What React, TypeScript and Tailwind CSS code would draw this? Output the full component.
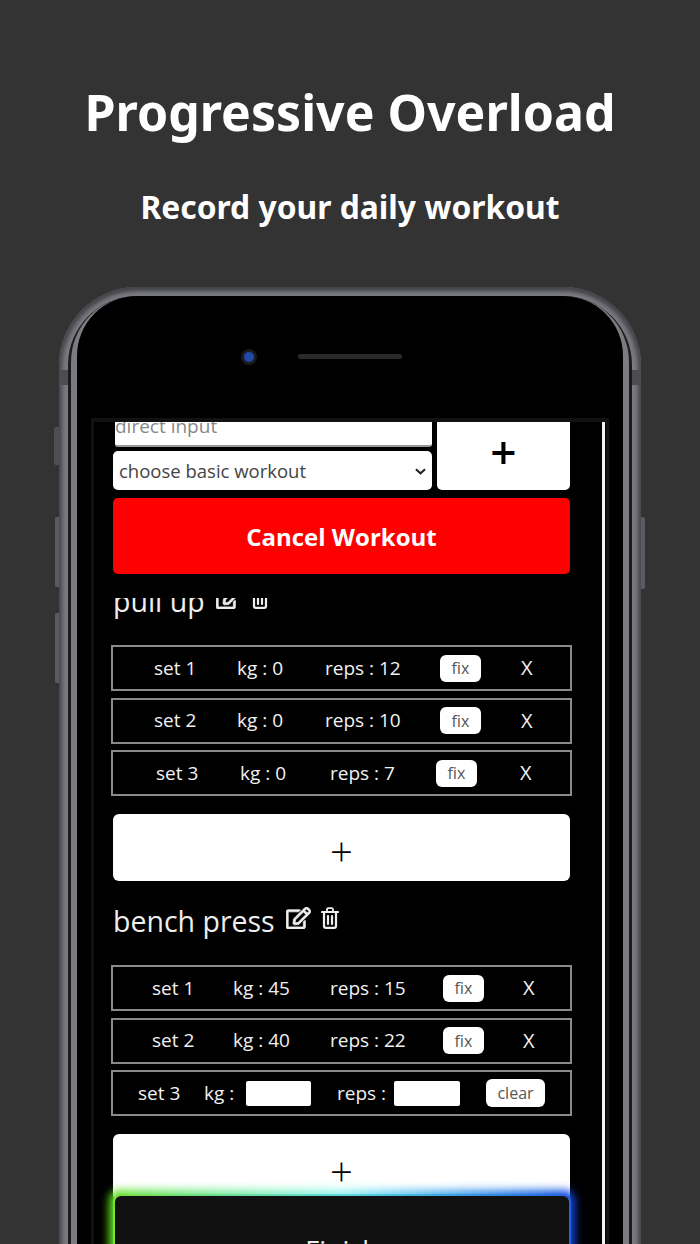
import { FaRegEdit } from "react-icons/fa";

const bodyFont = "font-['Open_Sans','Noto_Sans',sans-serif]";

type SetRowProps = {
  cols: string;
  label: string;
  kg: string;
  reps: string;
};

function SetRow({ cols, label, kg, reps }: SetRowProps) {
  return (
    <div className={`grid h-[46px] items-center border-2 border-[#8a8a8a] text-[19px] text-[#f2f2f2] ${cols}`}>
      <span>{label}</span>
      <span>kg : {kg}</span>
      <span>reps : {reps}</span>
      <button className="flex h-[27px] w-[41px] items-center justify-center rounded-[6px] bg-white text-[16px] text-[#555]">
        fix
      </button>
      <span className="text-[20px] font-medium">X</span>
    </div>
  );
}

function TrashIcon() {
  return (
    <svg viewBox="0 0 18 22" className="ml-[10px] -mt-[6px] h-[22px] w-[18px]" fill="none" stroke="currentColor">
      <path d="M1 5h16" strokeWidth="2.2" strokeLinecap="round" />
      <path d="M6 4.5V2.4C6 1.6 6.6 1.1 7.4 1.1h3.2c.8 0 1.4.5 1.4 1.3v2.1" strokeWidth="1.8" />
      <path d="M3 5v14c0 1.1.8 1.9 1.9 1.9h8.2c1.1 0 1.9-.8 1.9-1.9V5" strokeWidth="2.2" />
      <path d="M7 9v8M11 9v8" strokeWidth="2.2" strokeLinecap="round" />
    </svg>
  );
}

function WorkoutTitle({ name }: { name: string }) {
  return (
    <div className="flex items-center pb-[28px] text-[#eee]">
      <span className="text-[28.5px] leading-[32px]">{name}</span>
      <FaRegEdit
        className="ml-[11px] -mt-[6px] h-[22px] w-[25px]"
        stroke="currentColor"
        strokeWidth={18}
      />
      <TrashIcon />
    </div>
  );
}

function AddButton() {
  return (
    <button className="flex h-[67px] w-full items-center justify-center rounded-[6px] bg-white pt-[7px] text-[40px] leading-none font-light text-black">
      +
    </button>
  );
}

function Phone() {
  return (
    <div className="relative mt-[57px] h-[958px] w-[582px] shrink-0">
      {/* side buttons */}
      <div className="absolute top-[140px] -left-[5px] h-[38px] w-[5px] rounded-l-[2px] bg-[#4e4e55]" />
      <div className="absolute top-[230px] -left-[4px] h-[70px] w-[4px] rounded-l-[2px] bg-[#5a5a62]" />
      <div className="absolute top-[326px] -left-[4px] h-[70px] w-[4px] rounded-l-[2px] bg-[#5a5a62]" />
      <div className="absolute top-[230px] -right-[4px] h-[72px] w-[4px] rounded-r-[2px] bg-[#5a5a62]" />

      <div className="flex h-full flex-col rounded-t-[78px] bg-[#7a7a81] px-[9px] pt-[9px] shadow-[inset_3px_3px_4px_#45454b,inset_-3px_3px_4px_#45454b]">
        <div className="flex flex-1 flex-col rounded-t-[69px] bg-[#1c1c1f] px-[3px]">
          <div className="flex flex-1 flex-col rounded-t-[66px] bg-[#7c7c80] px-[6px]">
            <div className="flex flex-1 flex-col rounded-t-[60px] bg-black px-[14px]">
              <div className="flex items-center pt-[53px] pl-[150px]">
                <div className="flex h-[16px] w-[16px] items-center justify-center rounded-full bg-[#1a1a20]">
                  <div className="h-[10px] w-[10px] rounded-full bg-[#1f4aa8]" />
                </div>
                <div className="ml-[41px] h-[5px] w-[104px] -translate-y-px rounded-full bg-[#2a2a2a]" />
              </div>
              <div className="mt-[53px] flex-1">
                <Screen />
              </div>
            </div>
          </div>
        </div>
      </div>

      {/* antenna bands */}
      <div className="absolute top-[83px] left-0 h-[15px] w-[9px] bg-[#4c4c53]" />
      <div className="absolute top-[83px] right-0 h-[15px] w-[9px] bg-[#4c4c53]" />
    </div>
  );
}

function Screen() {
  return (
    <div className={`relative h-[826px] overflow-hidden border-x-[3px] border-t-4 border-[#111] bg-black ${bodyFont}`}>
      <div className="mr-[1px] h-full overflow-hidden border-r-[3px] border-[#f2f2f2] pr-[32px] pl-[19px]">
        <div className="-mt-[15px] grid grid-cols-[319px_133px] gap-x-[5px]">
          <div className="flex flex-col gap-[4px]">
            <input
              placeholder="direct input"
              className="ml-[2px] h-[40px] w-[317px] rounded-[3px] border-b-2 border-[#999] bg-white text-[19px] placeholder:text-[#888]"
            />
            <div className="relative">
              <select className="h-[39px] w-[319px] appearance-none rounded-[5px] bg-white pl-[6px] text-[18.5px] text-[#444]">
                <option>choose basic workout</option>
              </select>
              <svg viewBox="0 0 12 7" className="pointer-events-none absolute top-[17px] left-[302px] h-[7px] w-[11px]" fill="none" stroke="#222" strokeWidth="2.2">
                <path d="M1 1l5 4.5L11 1" />
              </svg>
            </div>
          </div>
          <button className="mt-[5px] flex items-center justify-center rounded-b-[5px] bg-white text-[46px] leading-none font-semibold text-black">
            +
          </button>
        </div>
        <button className="mt-[8px] h-[76px] w-full rounded-[5px] bg-[#ff0000] pt-[2px] text-[24px] font-bold text-[#fff]">
          Cancel Workout
        </button>

        <div className="mt-[24px] flex h-[47px] flex-col justify-end overflow-hidden">
          <WorkoutTitle name="pull up" />
        </div>
        <div className="-mx-[2px] flex flex-col gap-[6.5px]">
          <SetRow cols="grid-cols-[83px_88px_115px_81px_auto] pl-[41px]" label="set 1" kg="0" reps="12" />
          <SetRow cols="grid-cols-[83px_88px_115px_81px_auto] pl-[41px]" label="set 2" kg="0" reps="10" />
          <SetRow cols="grid-cols-[84px_90px_106px_84px_auto] pl-[43px]" label="set 3" kg="0" reps="7" />
        </div>
        <div className="mt-[18px]">
          <AddButton />
        </div>

        <div className="mt-[24px]">
          <WorkoutTitle name="bench press" />
        </div>
        <div className="-mx-[2px] flex flex-col gap-[6.5px]">
          <SetRow cols="grid-cols-[81px_97px_113px_80px_auto] pl-[39px]" label="set 1" kg="45" reps="15" />
          <SetRow cols="grid-cols-[81px_97px_113px_80px_auto] pl-[39px]" label="set 2" kg="40" reps="22" />
          <div className="grid h-[46px] grid-cols-[66px_133px_149px_auto] items-center border-2 border-[#8a8a8a] pl-[25px] text-[19px] text-[#f2f2f2]">
            <span>set 3</span>
            <div className="flex items-center justify-between pr-[26px]">
              <span>kg :</span>
              <input className="h-[25px] w-[65px] rounded-[2px] bg-white" />
            </div>
            <div className="flex items-center justify-between pr-[26px]">
              <span>reps :</span>
              <input className="h-[25px] w-[66px] rounded-[2px] bg-white" />
            </div>
            <button className="flex h-[28px] w-[59px] items-center justify-center rounded-[6px] bg-white text-[16px] text-[#555]">
              clear
            </button>
          </div>
        </div>
        <div className="mt-[18px]">
          <AddButton />
        </div>
      </div>

      {/* floating finish button */}
      <div className="absolute top-[774px] left-[21px] h-[110px] w-[454px]">
        <div className="absolute -inset-[6px] rounded-[10px] bg-gradient-to-r from-[#62e010] via-[#90f4f0] to-[#1040e0] blur-[4px]" />
        <div className="absolute -inset-[2px] rounded-[7px] bg-gradient-to-r from-[#7ce030] via-[#60d8d8] to-[#2a5fe0]" />
        <button className="relative flex h-full w-full justify-center rounded-[6px] bg-[#111] pt-[39px] text-[27px] leading-[32px] text-[#eee]">
          Finish
        </button>
      </div>
    </div>
  );
}

export default function App() {
  return (
    <div className="flex h-[1244px] w-[700px] flex-col items-center overflow-hidden bg-[#333]">
      <h1 className="mt-[76px] text-[50px] leading-[72px] font-bold text-white font-['Noto_Sans',sans-serif]">
        Progressive Overload
      </h1>
      <h2 className="mt-[36px] text-[31.8px] leading-[46px] font-bold text-white font-['Noto_Sans',sans-serif]">
        Record your daily workout
      </h2>
      <Phone />
    </div>
  );
}
